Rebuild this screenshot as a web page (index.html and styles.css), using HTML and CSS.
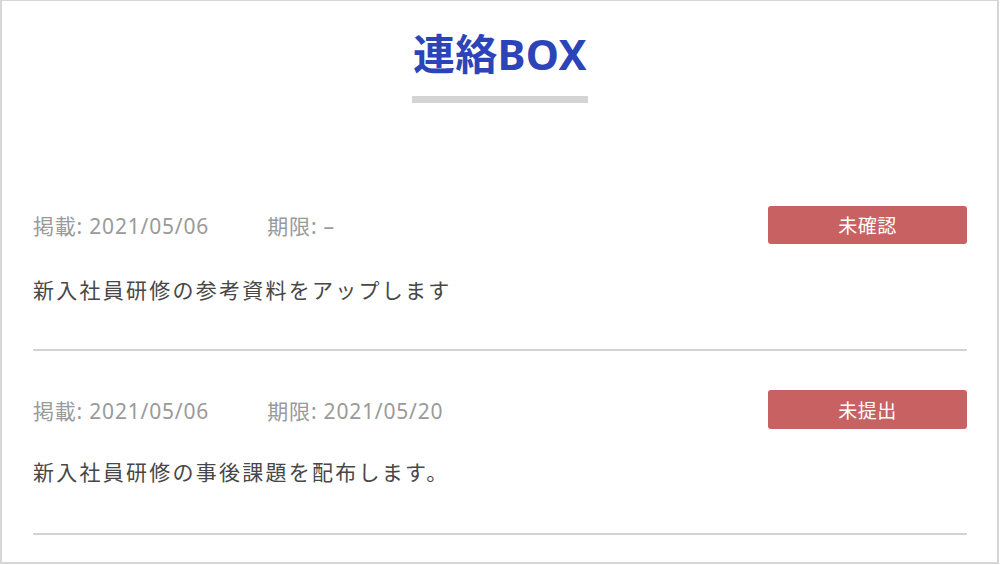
FILE: index.html
```html
<!DOCTYPE html>
<html lang="ja">
<head>
<meta charset="utf-8">
<title>連絡BOX</title>
<link rel="stylesheet" href="styles.css">
</head>
<body>
<div class="frame">
  <header class="header">
    <h1 class="title">連絡BOX</h1>
    <div class="title-bar"></div>
  </header>
  <ul class="list">
    <li class="item">
      <div class="meta-row">
        <div class="meta">
          <span class="meta-posted">掲載: 2021/05/06</span>
          <span class="meta-due">期限: –</span>
        </div>
        <span class="badge">未確認</span>
      </div>
      <p class="message">新入社員研修の参考資料をアップします</p>
    </li>
    <li class="item">
      <div class="meta-row">
        <div class="meta">
          <span class="meta-posted">掲載: 2021/05/06</span>
          <span class="meta-due">期限: 2021/05/20</span>
        </div>
        <span class="badge">未提出</span>
      </div>
      <p class="message">新入社員研修の事後課題を配布します。</p>
    </li>
  </ul>
</div>
</body>
</html>
```
FILE: styles.css
```css
html, body {
  margin: 0;
  padding: 0;
  background: #ffffff;
}
body {
  font-family: "Noto Sans", "Noto Sans CJK JP", sans-serif;
  overflow: hidden;
}
.frame {
  box-sizing: border-box;
  width: 999px;
  height: 564px;
  border: 2px solid #d6d6d6;
  border-top-width: 1px;
  padding: 0 30px 0 31px;
  overflow: hidden;
}
.header {
  padding-top: 29px;
  display: flex;
  flex-direction: column;
  align-items: center;
  margin-bottom: 64px;
}
.title {
  margin: 0;
  font-size: 42px;
  line-height: 48px;
  font-weight: 700;
  color: #2d44b8;
  letter-spacing: 0.3px;
}
.title-bar {
  width: 176px;
  height: 7px;
  margin-top: 18px;
  background: #d4d4d4;
}
.list {
  list-style: none;
  margin: 0;
  padding: 0;
}
.item {
  padding: 39px 0 44px;
  border-bottom: 2px solid #d3d3d3;
}
.item + .item {
  padding-bottom: 46px;
}
.item + .item .message {
  margin-top: 28px;
}
.item + .item .meta-row {
  height: 39px;
}
.meta-row {
  display: flex;
  align-items: center;
  justify-content: space-between;
  height: 38px;
}
.meta {
  font-size: 21px;
  color: #9a9a9a;
  letter-spacing: 0.8px;
}
.meta-due {
  margin-left: 52px;
}
.badge {
  width: 199px;
  height: 100%;
  border-radius: 3px;
  background: #c86161;
  color: #ffffff;
  font-size: 19px;
  letter-spacing: 0.5px;
  display: flex;
  align-items: center;
  justify-content: center;
}
.message {
  margin: 31px 0 0;
  font-size: 21px;
  line-height: 30px;
  color: #474747;
  letter-spacing: 2.25px;
}
```
